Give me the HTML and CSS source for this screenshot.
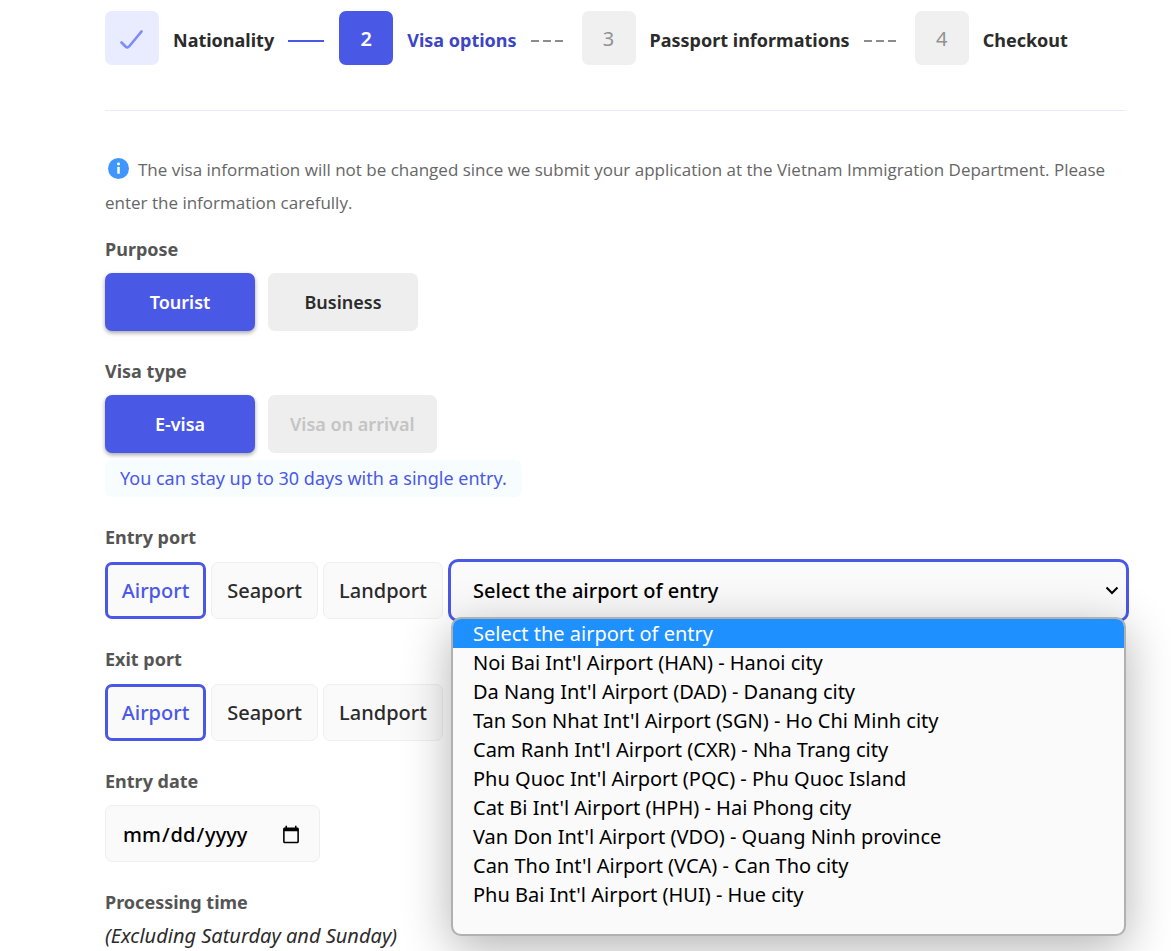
FILE: index.html
```html
<!DOCTYPE html>
<html lang="en">
<head>
<meta charset="utf-8">
<meta name="viewport" content="width=device-width, initial-scale=1">
<title>Visa options</title>
<link rel="stylesheet" href="styles.css">
</head>
<body>
<main class="page">
  <ol class="steps">
    <li class="step step-done">
      <span class="step-box"><svg class="check" viewBox="0 0 54 54" aria-label="Done"><path d="M16.500 31.500L20.500 35.500Q22.500 37.500 24.500 35L36.500 20.500" fill="none" stroke="#7f8cfa" stroke-width="2.700" stroke-linecap="round" stroke-linejoin="round"/></svg></span>
      <span class="step-name">Nationality</span>
      <span class="connector connector-solid"></span>
    </li>
    <li class="step step-current" aria-current="step">
      <span class="step-box">2</span>
      <span class="step-name">Visa options</span>
      <span class="connector"></span>
    </li>
    <li class="step">
      <span class="step-box">3</span>
      <span class="step-name">Passport informations</span>
      <span class="connector"></span>
    </li>
    <li class="step">
      <span class="step-box">4</span>
      <span class="step-name">Checkout</span>
    </li>
  </ol>

  <form class="form">
    <p class="notice"><svg class="info" viewBox="0 0 20 20" aria-hidden="true"><circle cx="10" cy="10" r="10" fill="#4096ff"/><circle cx="10" cy="5.800" r="1.400" fill="#fff"/><path d="M8.800 8.500h2.400v6.500H8.800z" fill="#fff"/></svg>The visa information will not be changed since we submit your application at the Vietnam Immigration Department. Please enter the information carefully.</p>

    <section class="group">
      <h2 class="label" id="purpose">Purpose</h2>
      <div class="choices" role="group" aria-labelledby="purpose">
        <button type="button" class="choice choice-on" aria-pressed="true">Tourist</button>
        <button type="button" class="choice" aria-pressed="false">Business</button>
      </div>
    </section>

    <section class="group">
      <h2 class="label" id="visa-type">Visa type</h2>
      <div class="choices" role="group" aria-labelledby="visa-type">
        <button type="button" class="choice choice-on" aria-pressed="true">E-visa</button>
        <button type="button" class="choice" disabled>Visa on arrival</button>
      </div>
      <p class="hint">You can stay up to 30 days with a single entry.</p>
    </section>

    <section class="group">
      <label class="label" for="entry-airport">Entry port</label>
      <div class="ports">
        <button type="button" class="port port-on" aria-pressed="true">Airport</button>
        <button type="button" class="port" aria-pressed="false">Seaport</button>
        <button type="button" class="port port-wide" aria-pressed="false">Landport</button>
        <div class="picker">
          <select class="select" id="entry-airport">
            <option>Select the airport of entry</option>
          </select>
          <svg class="chevron" viewBox="0 0 14 9" aria-hidden="true"><path d="M1.500 1.500L7 7l5.500-5.500" fill="none" stroke="#000" stroke-width="2"/></svg>
          <ul class="menu" role="listbox" aria-label="Airport of entry">
            <li class="option option-active" role="option" aria-selected="true">Select the airport of entry</li>
            <li class="option" role="option">Noi Bai Int'l Airport (HAN) - Hanoi city</li>
            <li class="option" role="option">Da Nang Int'l Airport (DAD) - Danang city</li>
            <li class="option" role="option">Tan Son Nhat Int'l Airport (SGN) - Ho Chi Minh city</li>
            <li class="option" role="option">Cam Ranh Int'l Airport (CXR) - Nha Trang city</li>
            <li class="option" role="option">Phu Quoc Int'l Airport (PQC) - Phu Quoc Island</li>
            <li class="option" role="option">Cat Bi Int'l Airport (HPH) - Hai Phong city</li>
            <li class="option" role="option">Van Don Int'l Airport (VDO) - Quang Ninh province</li>
            <li class="option" role="option">Can Tho Int'l Airport (VCA) - Can Tho city</li>
            <li class="option" role="option">Phu Bai Int'l Airport (HUI) - Hue city</li>
          </ul>
        </div>
      </div>
    </section>

    <section class="group">
      <h2 class="label" id="exit-port">Exit port</h2>
      <div class="ports" role="group" aria-labelledby="exit-port">
        <button type="button" class="port port-on" aria-pressed="true">Airport</button>
        <button type="button" class="port" aria-pressed="false">Seaport</button>
        <button type="button" class="port port-wide" aria-pressed="false">Landport</button>
      </div>
    </section>

    <section class="group">
      <label class="label" for="entry-date">Entry date</label>
      <input class="date" id="entry-date" type="date">
    </section>

    <section class="group">
      <h2 class="label label-tight">Processing time</h2>
      <p class="aside">(Excluding Saturday and Sunday)</p>
    </section>
  </form>
</main>
</body>
</html>
```
FILE: styles.css
```css
* { box-sizing: border-box; }

body {
  margin: 0;
  background: #fff;
  color: #2b2b2b;
  font-family: "Segoe UI", "Noto Sans", "Open Sans", sans-serif;
  font-size: 20px;
}

button, select, input { font: inherit; color: inherit; }

.page { padding: 11px 45px 0 105px; }

.steps {
  display: flex;
  margin: 0;
  padding: 0 0 45px;
  list-style: none;
  border-bottom: 1px solid #e8eaff;
}
.step { display: flex; align-items: center; white-space: nowrap; }
.step-box {
  display: flex;
  align-items: center;
  justify-content: center;
  width: 54px;
  height: 54px;
  margin-right: 14px;
  border-radius: 7px;
  background: #f0f0f0;
  color: #929292;
}
.step-name { font-weight: 700; font-size: 18px; line-height: 24px; padding-top: 4px; }
.step-done .step-box { background: #e9ecff; }
.step-current .step-box { background: #4a58e6; color: #fff; font-weight: 600; }
.step-current .step-name { color: #3d45c4; }
.check { width: 54px; height: 54px; }
.connector {
  width: 36px;
  height: 2px;
  margin: 6px 15px 0 14px;
  background: repeating-linear-gradient(90deg, #8c8c8c 0 8px, transparent 8px 12px);
}
.connector-solid { background: #4a58e6; }

.notice {
  margin: 42px 0 14px;
  color: #666;
  font-family: "Segoe UI", "Open Sans", sans-serif;
  font-size: 17px;
  line-height: 33px;
}
.info { width: 21px; height: 21px; margin: 0 9px 0 3px; vertical-align: -3px; }

.group { margin-bottom: 24px; }
.label {
  display: block;
  width: fit-content;
  margin: 0 0 8px;
  color: #555;
  font-size: 18px;
  font-weight: 700;
  line-height: 32px;
}
.label-tight { margin-bottom: 2px; }

.choices { display: flex; gap: 13px; }
.choice {
  min-width: 150px;
  height: 58px;
  padding: 0 22px;
  border: 0;
  border-radius: 7px;
  background: #eee;
  font-size: 18px;
  font-weight: 600;
}
.choice-on { background: #4a58e6; color: #fff; box-shadow: 0 2px 4px rgba(0, 0, 0, .35); }
.choice:disabled { color: #c4c4c4; }

.hint {
  width: fit-content;
  margin: 7px 0 0;
  padding: 0 15px 1px;
  border-radius: 7px;
  background: #f7fcff;
  color: #4a58e6;
  font-size: 18px;
  line-height: 36px;
}

.ports { display: flex; gap: 5px; padding-top: 1px; }
.port {
  min-width: 107px;
  height: 57px;
  padding: 0 8px;
  border: 1px solid #efefef;
  border-radius: 7px;
  background: #fafafa;
  font-weight: 500;
}
.port-wide { min-width: 120px; }
.port-on { min-width: 101px; border: 3px solid #4a58e6; color: #4a58e6; }

.picker { position: relative; flex: 1; margin-left: 3px; }
.select {
  display: block;
  width: 100%;
  height: 57px;
  padding: 0 40px 0 22px;
  border: 0;
  border-radius: 7px;
  outline: 3px solid #4a58e6;
  appearance: none;
  background: #fafafa;
  color: #000;
  font-weight: 500;
}
.chevron { position: absolute; top: 24px; right: 7px; width: 14px; height: 9px; }
.menu {
  position: absolute;
  z-index: 1;
  top: 100%;
  left: 0;
  right: 0;
  margin: -2px 0 0;
  padding: 0 0 25px;
  overflow: hidden;
  list-style: none;
  border: 2px solid #b0b0b0;
  border-radius: 10px;
  background: #fafafa;
  box-shadow: 0 12px 48px rgba(0, 0, 0, .3);
  color: #000;
}
.option { padding: 0 20px; line-height: 29px; }
.option-active { background: #1e90ff; color: #fff; }

.date {
  display: block;
  width: 215px;
  height: 57px;
  padding: 2px 16px 0;
  border: 1px solid #efefef;
  border-radius: 7px;
  background: #fafafa;
  color: #000;
  font-weight: 500;
}

.aside { margin: 0; font-style: italic; line-height: 32px; }
```
